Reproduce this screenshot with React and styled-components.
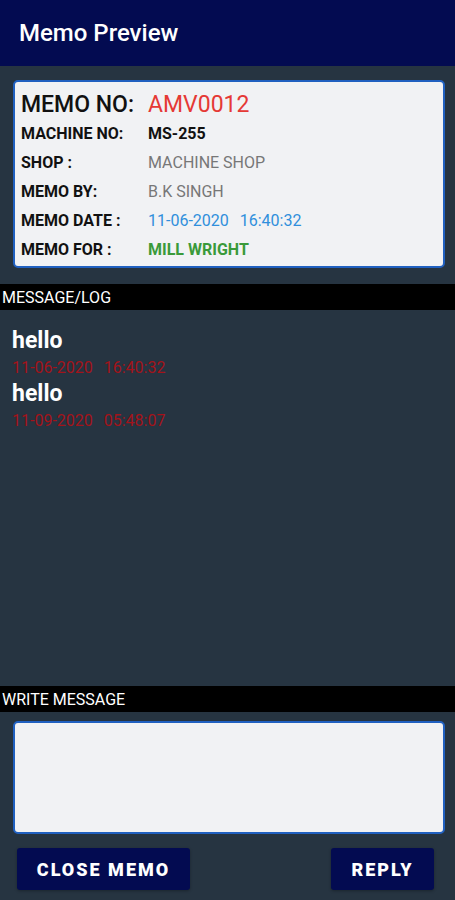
import styled, { createGlobalStyle } from "styled-components";

const Global = createGlobalStyle`
  html, body {
    margin: 0;
    padding: 0;
  }
  body {
    font-family: Roboto, "Liberation Sans", Arial, sans-serif;
    background: #263441;
  }
  * {
    box-sizing: border-box;
  }
`;

const Screen = styled.div`
  width: 100%;
  height: 100vh;
  display: flex;
  flex-direction: column;
  background: #263441;
`;

const Header = styled.div`
  height: 66px;
  flex-shrink: 0;
  background: #030b51;
  display: flex;
  align-items: center;
  padding-left: 19px;
  color: #fff;
  font-size: 24px;
  font-weight: 500;
`;

const Card = styled.div`
  margin: 14px 10px 16px 13px;
  border: 2px solid #2060c0;
  border-radius: 5px;
  background: #f1f2f4;
  padding: 8px 0 2px 6px;
`;

const TitleRow = styled.div`
  display: flex;
  align-items: center;
  height: 29px;
  font-size: 23px;
`;

const Row = styled.div`
  display: flex;
  align-items: center;
  height: 29px;
  font-size: 16px;
`;

const Label = styled.div`
  width: 127px;
  flex-shrink: 0;
  color: #111;
  font-weight: ${(p) => (p.$big ? 500 : 700)};
`;

const Value = styled.div`
  color: ${(p) => p.$color || "#111"};
  font-weight: ${(p) => (p.$bold ? 700 : 400)};
  word-spacing: ${(p) => (p.$wide ? "7px" : "normal")};
`;

const Bar = styled.div`
  height: 26px;
  flex-shrink: 0;
  background: #000;
  color: #fff;
  font-size: 16px;
  display: flex;
  align-items: center;
  padding-left: 2px;
`;

const Log = styled.div`
  flex: 1;
  padding: 17px 12px;
`;

const Message = styled.div`
  display: flex;
  flex-direction: column;
`;

const MessageText = styled.div`
  color: #fff;
  font-size: 23px;
  font-weight: 700;
  line-height: 28px;
`;

const MessageDate = styled.div`
  color: #a3131a;
  font-size: 16px;
  line-height: 25px;
  word-spacing: 7px;
`;

const Compose = styled.div`
  flex-shrink: 0;
  padding: 9px 10px 10px 13px;
  display: flex;
  flex-direction: column;
  gap: 14px;
`;

const TextBox = styled.textarea`
  display: block;
  width: 100%;
  height: 113px;
  border: 2px solid #2060c0;
  border-radius: 5px;
  background: #f1f2f4;
  resize: none;
  outline: none;
  font-family: inherit;
  font-size: 16px;
  padding: 8px;
`;

const Buttons = styled.div`
  display: flex;
  justify-content: space-between;
  padding: 0 11px 0 4px;
`;

const Button = styled.button`
  height: 42px;
  width: ${(p) => p.$w}px;
  border: none;
  border-radius: 3px;
  background: #030b51;
  color: #fff;
  font-family: Roboto, "Liberation Sans", Arial, sans-serif;
  font-size: 18px;
  font-weight: 900;
  letter-spacing: 2px;
  padding: 0;
  cursor: pointer;
  box-shadow: 0 1px 3px rgba(0, 0, 0, 0.3);
`;

const rows = [
  { label: "MACHINE NO:", value: "MS-255", color: "#111", bold: true },
  { label: "SHOP :", value: "MACHINE SHOP", color: "#777" },
  { label: "MEMO BY:", value: "B.K SINGH", color: "#777" },
  { label: "MEMO DATE :", value: "11-06-2020 16:40:32", color: "#2f8fdc", wide: true },
  { label: "MEMO FOR :", value: "MILL WRIGHT", color: "#3a9a3a", bold: true },
];

const messages = [
  { text: "hello", date: "11-06-2020 16:40:32" },
  { text: "hello", date: "11-09-2020 05:48:07" },
];

export default function App() {
  return (
    <Screen>
      <Global />
      <Header>Memo Preview</Header>
      <Card>
        <TitleRow>
          <Label $big>MEMO NO:</Label>
          <Value $color="#e53935">AMV0012</Value>
        </TitleRow>
        {rows.map((r) => (
          <Row key={r.label}>
            <Label>{r.label}</Label>
            <Value $color={r.color} $bold={r.bold} $wide={r.wide}>
              {r.value}
            </Value>
          </Row>
        ))}
      </Card>
      <Bar>MESSAGE/LOG</Bar>
      <Log>
        {messages.map((m, i) => (
          <Message key={i}>
            <MessageText>{m.text}</MessageText>
            <MessageDate>{m.date}</MessageDate>
          </Message>
        ))}
      </Log>
      <Bar>WRITE MESSAGE</Bar>
      <Compose>
        <TextBox />
        <Buttons>
          <Button $w={173}>CLOSE MEMO</Button>
          <Button $w={103}>REPLY</Button>
        </Buttons>
      </Compose>
    </Screen>
  );
}
